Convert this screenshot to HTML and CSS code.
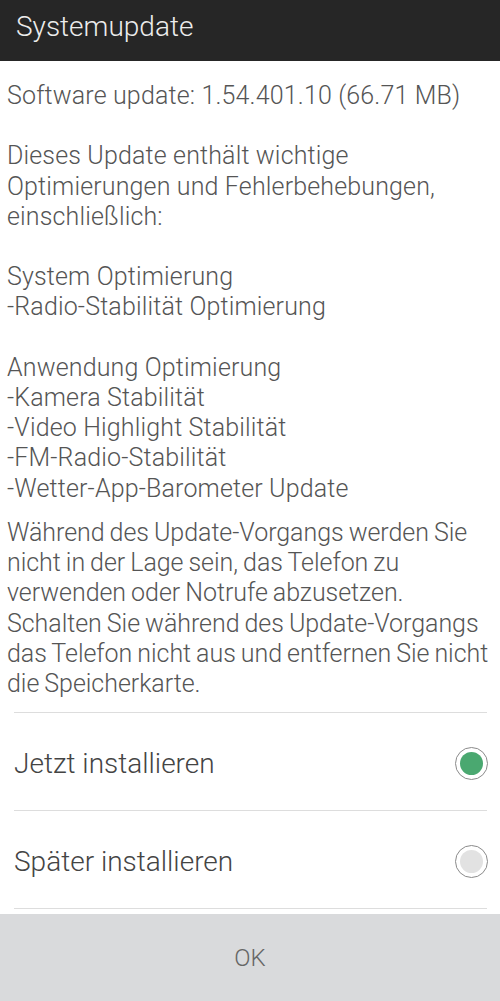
FILE: index.html
```html
<!DOCTYPE html>
<html lang="de">
<head>
<meta charset="utf-8">
<title>Systemupdate</title>
<link rel="stylesheet" href="styles.css">
</head>
<body>
<div class="screen">
  <header class="titlebar">Systemupdate</header>
  <main class="content">
    <div class="text">
      <p class="block">Software update: 1.54.401.10 (66.71 MB)</p>
      <p class="block">Dieses Update enthält wichtige<br>Optimierungen und Fehlerbehebungen,<br>einschließlich:</p>
      <p class="block">System Optimierung<br>-Radio-Stabilität Optimierung</p>
      <p class="block">Anwendung Optimierung<br>-Kamera Stabilität<br>-Video Highlight Stabilität<br>-FM-Radio-Stabilität<br>-Wetter-App-Barometer Update</p>
      <p class="warning">Während des Update-Vorgangs werden Sie<br>nicht in der Lage sein, das Telefon zu<br>verwenden oder Notrufe abzusetzen.<br>Schalten Sie während des Update-Vorgangs<br>das Telefon nicht aus und entfernen Sie nicht<br>die Speicherkarte.</p>
    </div>
    <ul class="options">
      <li class="option"><span class="label">Jetzt installieren</span><span class="radio checked"></span></li>
      <li class="option"><span class="label">Später installieren</span><span class="radio"></span></li>
    </ul>
  </main>
  <footer class="footer"><button class="ok">OK</button></footer>
</div>
</body>
</html>
```
FILE: styles.css
```css
html, body {
  margin: 0;
  padding: 0;
  background: #ffffff;
}
.screen {
  width: 500px;
  height: 1001px;
  display: flex;
  flex-direction: column;
  font-family: Roboto, "Liberation Sans", sans-serif;
  font-weight: 300;
  overflow: hidden;
}
.titlebar {
  height: 61px;
  flex: none;
  background: #262626;
  color: #ececec;
  font-size: 28px;
  line-height: 54px;
  padding-left: 16px;
  box-sizing: border-box;
}
.content {
  flex: 1;
  display: flex;
  flex-direction: column;
}
.text {
  padding: 20px 0 0 7px;
  color: #555555;
  font-size: 25px;
  line-height: 30.2px;
  letter-spacing: 0.15px;
  white-space: nowrap;
}
.block {
  margin: 0 0 30.2px 0;
}
.warning {
  margin: -16px 0 0 0;
  letter-spacing: -0.05px;
  word-spacing: -1px;
}
.options {
  list-style: none;
  margin: 13px 13px 0 14px;
  padding: 0;
  border-top: 1px solid #dddddd;
}
.option {
  height: 98px;
  border-bottom: 1px solid #dddddd;
  display: flex;
  align-items: center;
  justify-content: space-between;
  padding-top: 4px;
  box-sizing: border-box;
}
.label {
  font-size: 28px;
  color: #444444;
}
.radio {
  width: 31px;
  height: 31px;
  border: 1.5px solid #8a8a8a;
  border-radius: 50%;
  display: flex;
  align-items: center;
  justify-content: center;
  margin-right: -1px;
}
.radio::after {
  content: "";
  width: 23px;
  height: 23px;
  border-radius: 50%;
  background: #e2e2e2;
}
.radio.checked::after {
  background: #4aa870;
}
.footer {
  height: 87px;
  flex: none;
  background: #d9dadc;
  display: flex;
}
.ok {
  flex: 1;
  border: 0;
  background: transparent;
  font-family: Roboto, "Liberation Sans", sans-serif;
  font-weight: 300;
  font-size: 24px;
  color: #666666;
  padding: 0;
}
```
